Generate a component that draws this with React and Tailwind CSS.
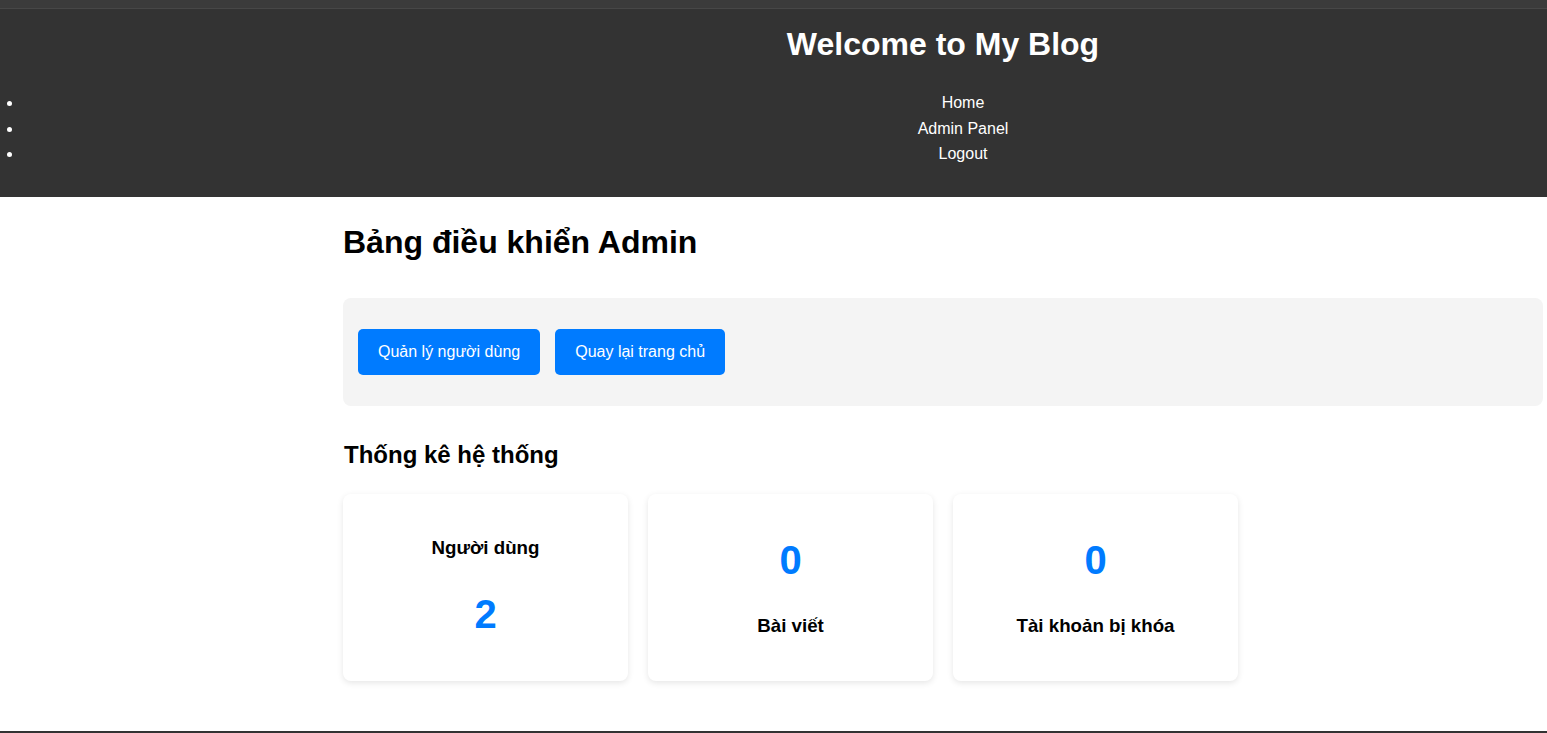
const NAV = ["Home", "Admin Panel", "Logout"];

const STATS = [
  { id: "users", label: "Người dùng", value: 2, valueFirst: false },
  { id: "posts", label: "Bài viết", value: 0, valueFirst: true },
  { id: "locked", label: "Tài khoản bị khóa", value: 0, valueFirst: true },
];

function StatCard({ label, value, valueFirst }) {
  const num = <p className="text-[40px] font-bold leading-[46px] text-[#007bff]">{value}</p>;
  const title = <h3 className="text-[18.72px] font-bold leading-[22px] text-black">{label}</h3>;
  return (
    <div className="flex h-[187px] flex-col items-center justify-center gap-[32px] rounded-lg bg-white shadow-[0_2px_6px_rgba(0,0,0,0.1)]">
      {valueFirst ? num : title}
      {valueFirst ? title : num}
    </div>
  );
}

export default function App() {
  return (
    <div className="w-full overflow-hidden bg-white font-['Liberation_Sans',Arial,sans-serif] text-black">
      <div className="w-[1886px]">
        <div className="h-[9px] border-b border-[#474747] bg-[#3b3b3b]" />
        <header className="bg-[#333333] pt-[17px] pb-[30px] text-white">
          <h1 className="text-center text-[32px] font-bold leading-[37px]">Welcome to My Blog</h1>
          <nav className="mt-[27px]">
            <ul className="list-disc pl-[23px]">
              {NAV.map((item) => (
                <li key={item} className="mr-[-17px] text-center text-[16px] leading-[25.6px]">
                  <a href="#">{item}</a>
                </li>
              ))}
            </ul>
          </nav>
        </header>

        <main className="mx-auto w-[1200px] pt-[27px] pb-[50px]">
          <h2 className="text-[32px] font-bold leading-[37px]">Bảng điều khiển Admin</h2>

          <div className="mt-[37px] flex gap-[15px] rounded-lg bg-[#f4f4f4] px-[15px] py-[31px]">
            <button type="button" className="rounded-[5px] bg-[#007bff] px-[20px] py-[10px] text-[16px] leading-[26px] text-white">
              Quản lý người dùng
            </button>
            <button type="button" className="rounded-[5px] bg-[#007bff] px-[20px] py-[10px] text-[16px] leading-[26px] text-white">
              Quay lại trang chủ
            </button>
          </div>

          <h2 className="mt-[35px] pl-px text-[24px] font-bold leading-[28px]">Thống kê hệ thống</h2>

          <div className="mt-[25px] grid grid-cols-4 gap-[20px]">
            {STATS.map((s) => (
              <StatCard key={s.id} {...s} />
            ))}
          </div>
        </main>

        <footer className="h-[60px] bg-[#333333]" />
      </div>
    </div>
  );
}
